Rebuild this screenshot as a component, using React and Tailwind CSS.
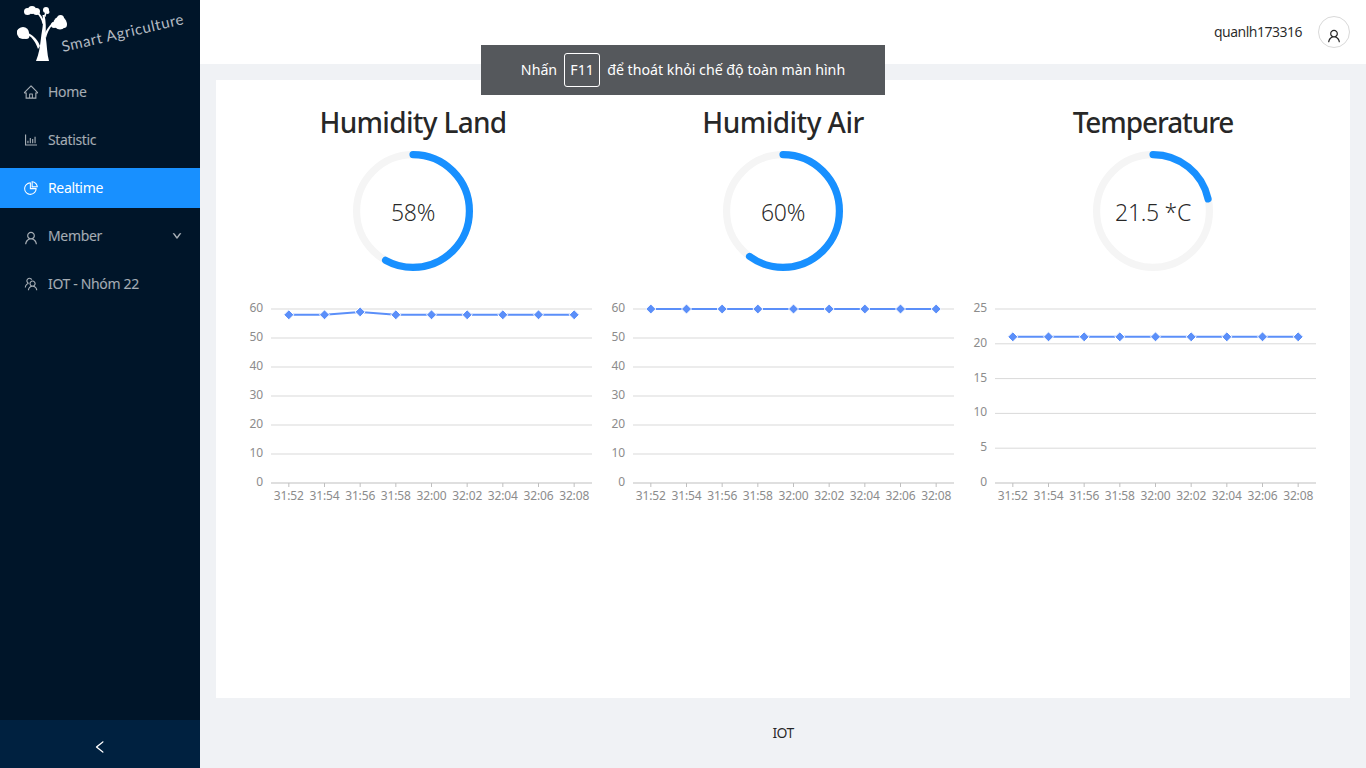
import React from "react";
import { AiOutlineHome, AiOutlineBarChart, AiOutlinePieChart, AiOutlineUser, AiOutlineTeam, AiOutlineDown, AiOutlineLeft } from "react-icons/ai";

const TIMES = ["31:52", "31:54", "31:56", "31:58", "32:00", "32:02", "32:04", "32:06", "32:08"];

const MENU = [
  { label: "Home", icon: AiOutlineHome },
  { label: "Statistic", icon: AiOutlineBarChart },
  { label: "Realtime", icon: AiOutlinePieChart, active: true },
  { label: "Member", icon: AiOutlineUser, arrow: true, iconClass: "translate-y-0.5" },
  { label: "IOT - Nhóm 22", icon: AiOutlineTeam },
];

const SENSORS = [
  { title: "Humidity Land", text: "58%", percent: 58, titleClass: "tracking-[-0.7px]" },
  { title: "Humidity Air", text: "60%", percent: 60, titleClass: "tracking-[-0.55px]" },
  { title: "Temperature", text: "21.5 *C", percent: 21.5, titleClass: "tracking-[-1.1px]" },
];

const CHARTS = [
  { ticks: [0, 10, 20, 30, 40, 50, 60], max: 60, values: [58, 58, 59, 58, 58, 58, 58, 58, 58] },
  { ticks: [0, 10, 20, 30, 40, 50, 60], max: 60, values: [60, 60, 60, 60, 60, 60, 60, 60, 60] },
  { ticks: [0, 5, 10, 15, 20, 25], max: 25, values: [21, 21, 21, 21, 21, 21, 21, 21, 21] },
];

function Logo() {
  return (
    <svg width="200" height="64" viewBox="0 0 200 64" className="block">
      <g fill="#fff">
        {/* trunk and main branch */}
        <path d="M36 61 C39 54 40 46 41 38 C42 30 44 22 42.5 15 L44.5 15 C46 22 46 28 45.5 35 C47 45 47 54 49 61 Z" />
        <path d="M44 35 C46 30 49 26 53 22 L54.5 23.5 C50 27 48 31 46 38 Z" />
        <path d="M38 49 C36 43 33 38 28 35 L29 33.5 C34 36 38.5 41 40 46 Z" />
        <path d="M42.5 24 C41.5 19 39.5 16 36.5 13 L38 12 C41 15 43.5 18 44 23 Z" />
        <path d="M44 16 L45.5 11 L47 11.5 L45.5 17 Z" />
        {/* leaf clouds */}
        <circle cx="23" cy="33" r="6" />
        <circle cx="20.5" cy="32" r="3.5" />
        <circle cx="26" cy="35.5" r="3.5" />
        <circle cx="27.5" cy="11.5" r="3.5" />
        <circle cx="32" cy="10" r="4" />
        <circle cx="36.5" cy="11.5" r="3.5" />
        <circle cx="46" cy="10" r="3" />
        <circle cx="47.5" cy="12" r="2" />
        <circle cx="60" cy="23" r="6.5" />
        <circle cx="63.5" cy="24.5" r="3.5" />
        <circle cx="60.5" cy="18.5" r="3.5" />
        <circle cx="54" cy="25" r="3" />
      </g>
      <text x="63" y="52" transform="rotate(-13 63 52)" fill="#b4bbc3" fontSize="15" letterSpacing="0.6" style={{ fontFamily: "Lato, sans-serif" }}>Smart Agriculture</text>
    </svg>
  );
}

function Sidebar() {
  return (
    <aside className="w-[200px] shrink-0 h-full bg-[#001529] flex flex-col">
      <div className="h-16 overflow-hidden"><Logo /></div>
      <nav className="flex-1 pt-2 flex flex-col gap-2">
        {MENU.map((item) => (
          <div key={item.label} className={`h-10 pl-[23px] pr-4 flex items-center text-sm tracking-[-0.35px] ${item.active ? "bg-[#1890ff] text-white" : "text-white/65"}`}>
            <item.icon className={`text-base mr-[9px] ${item.iconClass || ""}`} />
            <span className="flex-1">{item.label}</span>
            {item.arrow && <AiOutlineDown className="text-[10px] mr-[2.5px] text-white/50" stroke="currentColor" strokeWidth="100" />}
          </div>
        ))}
      </nav>
      <div className="h-12 bg-[#002140] flex items-center justify-center text-white">
        <AiOutlineLeft className="text-base mt-1.5" />
      </div>
    </aside>
  );
}

function Gauge({ percent, text }) {
  const r = 47;
  const len = 2 * Math.PI * r;
  return (
    <div className="relative w-[120px] h-[120px]">
      <svg width="120" height="120" viewBox="0 0 100 100" className="-rotate-90">
        <circle cx="50" cy="50" r={r} fill="none" stroke="#f5f5f5" strokeWidth="6" />
        <circle cx="50" cy="50" r={r} fill="none" stroke="#1890ff" strokeWidth="6" strokeLinecap="round" strokeDasharray={`${(len * percent) / 100} ${len}`} />
      </svg>
      <div className="absolute inset-0 pt-0.5 flex items-center justify-center text-[23px] font-light tracking-[-0.3px] text-black/85 whitespace-nowrap">{text}</div>
    </div>
  );
}

function LineChart({ ticks, max, values }) {
  const left = 31, right = 352, top = 14, bottom = 188;
  const step = (right - left) / values.length;
  const xAt = (i) => left + step * (i + 0.5);
  const yAt = (v) => bottom - (v / max) * (bottom - top);
  return (
    <svg width="362" height="215" className="block" letterSpacing="-0.15" style={{ fontFamily: "'Noto Sans', sans-serif" }}>
      {ticks.map((t) => (
        <g key={t}>
          <line x1={left} x2={right} y1={yAt(t)} y2={yAt(t)} stroke={t === 0 ? "#bfbfbf" : "#d9d9d9"} />
          <text x={left - 8} y={yAt(t) + 3} textAnchor="end" fontSize="12" fill="#8c8c8c">{t}</text>
        </g>
      ))}
      {TIMES.map((t, i) => (
        <g key={t}>
          <line x1={xAt(i)} x2={xAt(i)} y1={bottom} y2={bottom + 4} stroke="#bfbfbf" />
          <text x={xAt(i)} y={205} textAnchor="middle" fontSize="12" fill="#8c8c8c">{t}</text>
        </g>
      ))}
      <polyline points={values.map((v, i) => `${xAt(i)},${yAt(v)}`).join(" ")} fill="none" stroke="#5b8ff9" strokeWidth="2" />
      {values.map((v, i) => (
        <path key={i} d={`M${xAt(i)} ${yAt(v) - 5}L${xAt(i) + 5} ${yAt(v)}L${xAt(i)} ${yAt(v) + 5}L${xAt(i) - 5} ${yAt(v)}Z`} fill="#5b8ff9" stroke="#fff" strokeWidth="1" />
      ))}
    </svg>
  );
}

export default function App() {
  return (
    <div className="h-screen w-full flex overflow-hidden bg-[#f0f2f5] relative" style={{ fontFamily: "'Noto Sans', sans-serif" }}>
      <Sidebar />
      <div className="flex-1 flex flex-col min-w-0">
        <header className="h-16 bg-white shrink-0 flex items-center justify-end pr-4 gap-4">
          <span className="text-sm tracking-[-0.5px] text-black/85">quanlh173316</span>
          <div className="w-8 h-8 rounded-full border border-[#d9d9d9] flex items-center justify-center pt-2">
            <AiOutlineUser className="text-base text-[#262626]" />
          </div>
        </header>
        <main className="mx-4 mt-4 h-[618px] bg-white">
          <div className="grid grid-cols-3 px-3 pt-6">
            {SENSORS.map((s) => (
              <div key={s.title} className="flex flex-col items-center">
                <h2 className={`h-9 leading-9 text-[28px] font-medium text-black/85 ${s.titleClass}`}>{s.title}</h2>
                <div className="mt-[11px]"><Gauge percent={s.percent} text={s.text} /></div>
              </div>
            ))}
          </div>
          <div className="grid grid-cols-3 px-6 mt-6">
            {CHARTS.map((c, i) => <LineChart key={i} {...c} />)}
          </div>
        </main>
        <footer className="flex-1 flex items-center justify-center text-sm tracking-[-0.6px] text-black/85">IOT</footer>
      </div>
      <div className="absolute left-[481px] top-[45px] w-[404px] h-[50px] bg-[#55585c] flex items-center justify-center text-[14.2px] text-white whitespace-nowrap">
        <span>Nhấn</span>
        <span className="mx-[7px] w-9 h-[34px] border border-white rounded-[3px] flex items-center justify-center">F11</span>
        <span>để thoát khỏi chế độ toàn màn hình</span>
      </div>
    </div>
  );
}
